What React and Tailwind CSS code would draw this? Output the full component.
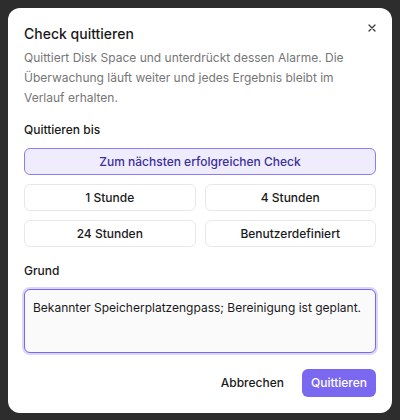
import React, { useState } from 'react';

const OPTIONS = ['1 Stunde', '4 Stunden', '24 Stunden', 'Benutzerdefiniert'];

const AckDialog = () => {
  const [until, setUntil] = useState('next');
  const [reason, setReason] = useState('Bekannter Speicherplatzengpass; Bereinigung ist geplant.');

  const optionClass = active =>
    `h-[27px] rounded-md border text-[12px] font-medium ${active ? 'bg-[#efedfd] border-[#8b7df5] text-[#3b2e9e]' : 'bg-white border-[#e8e8e8] text-[#1a1a1a]'}`;

  return (
    <div className="relative bg-white rounded-xl px-4 pt-[14px] pb-4 text-[#1a1a1a]">
      <button className="absolute right-[12px] top-[12px] w-4 h-4 flex items-center justify-center text-[#333]">
        <svg width="8" height="8" viewBox="0 0 8 8" fill="none" stroke="currentColor" strokeWidth="1.2" strokeLinecap="round">
          <path d="M1 1l6 6M7 1L1 7" />
        </svg>
      </button>

      <h2 className="text-[14px] leading-6 font-medium">Check quittieren</h2>
      <p className="mt-0.5 text-[12px] leading-5 text-[#767676] pr-4">
        Quittiert Disk Space und unterdrückt dessen Alarme. Die Überwachung läuft weiter und jedes Ergebnis bleibt im Verlauf erhalten.
      </p>

      <div className="mt-3 text-[12px] leading-5 font-medium">Quittieren bis</div>
      <button onClick={() => setUntil('next')} className={`mt-2 w-full ${optionClass(until === 'next')}`}>
        Zum nächsten erfolgreichen Check
      </button>
      <div className="mt-[9px] grid grid-cols-2 gap-[9px]">
        {OPTIONS.map(o => (
          <button key={o} onClick={() => setUntil(o)} className={optionClass(until === o)}>
            {o}
          </button>
        ))}
      </div>

      <div className="mt-[14px] text-[12px] leading-5 font-medium">Grund</div>
      <textarea
        autoFocus
        value={reason}
        onChange={e => setReason(e.target.value)}
        onFocus={e => {
          const end = e.target.value.length;
          e.target.setSelectionRange(end, end);
        }}
        className="mt-2 block w-full h-16 resize-none rounded-md border border-[#7b68ee] ring-2 ring-[#dcd6fb] bg-[#fafafa] px-2 py-2 text-[12px] leading-5 text-[#1a1a1a] caret-[#1a1a1a] outline-none"
      />

      <div className="mt-4 flex justify-end items-center gap-[18px]">
        <button className="h-7 text-[12px] font-medium text-[#1a1a1a]">Abbrechen</button>
        <button className="h-7 px-[9px] rounded-md bg-[#7b68f0] text-white text-[12px] font-medium">Quittieren</button>
      </div>
    </div>
  );
};

export default function App() {
  return (
    <div className="h-[420px] w-[400px] bg-[#2d2d2d] p-2" style={{ fontFamily: 'Inter, "Noto Sans", sans-serif' }}>
      <AckDialog />
    </div>
  );
}
